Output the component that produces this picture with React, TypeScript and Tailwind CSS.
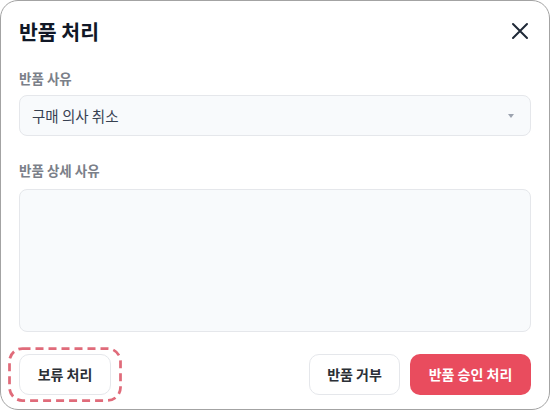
import { useState } from "react";

const reasons = ["구매 의사 취소", "상품 불량", "오배송", "기타"];

export default function App() {
  const [reason] = useState(reasons[0]);

  return (
    <div className="w-[550px] h-[412px] bg-white font-['Noto_Sans_CJK_KR','Noto_Sans',sans-serif]">
      <div className="w-[550px] h-[410px] rounded-[18px] border border-[#a3a3a3] bg-white flex flex-col px-[18px] pt-[16px] pb-[14px]">
        {/* header */}
        <div className="flex items-center justify-between h-[28px]">
          <h2 className="text-[20.5px] font-bold text-[#111827] leading-[28px]">반품 처리</h2>
          <button className="w-[22px] h-[22px] flex items-center justify-center text-[#1f2937]">
            <svg width="22" height="22" viewBox="0 0 22 22" fill="none" stroke="currentColor" strokeWidth="2" strokeLinecap="round">
              <path d="M4 4 L18 18 M18 4 L4 18" />
            </svg>
          </button>
        </div>

        <label className="mt-[23px] text-[13.5px] leading-[20px] font-semibold text-[#7b8089]">반품 사유</label>
        <div className="mt-[7px] h-[41px] rounded-[8px] border border-[#e5e7eb] bg-[#f8fafc] flex items-center justify-between pl-[12px] pr-[16px]">
          <span className="text-[14.5px] text-[#374151]">{reason}</span>
          <span className="w-0 h-0 border-x-[3.5px] border-x-transparent border-t-[4px] border-t-[#9ca3af]" />
        </div>

        <label className="mt-[24px] text-[13.5px] leading-[20px] font-semibold text-[#7b8089]">반품 상세 사유</label>
        <textarea className="mt-[9px] h-[143px] resize-none rounded-[8px] border border-[#e5e7eb] bg-[#f8fafc] outline-none" />

        {/* actions */}
        <div className="mt-[22px] flex items-center justify-between">
          <div className="relative">
            <button className="w-[92px] h-[41px] rounded-[10px] border border-[#e5e7eb] bg-white text-[14px] font-semibold text-[#2b2f36]">
              보류 처리
            </button>
            <svg className="absolute left-[-11px] top-[-7px] pointer-events-none" width="114" height="55" viewBox="0 0 114 55" fill="none">
              <rect x="1.5" y="1.5" width="111" height="52" rx="13" stroke="#e06b7a" strokeWidth="2.75" strokeDasharray="8 5" />
            </svg>
          </div>
          <div className="flex gap-[10px]">
            <button className="w-[91px] h-[41px] rounded-[10px] border border-[#e5e7eb] bg-white text-[14px] font-semibold text-[#2b2f36]">
              반품 거부
            </button>
            <button className="w-[121px] h-[41px] rounded-[10px] bg-[#e94c5e] text-[14px] font-semibold text-white">
              반품 승인 처리
            </button>
          </div>
        </div>
      </div>
    </div>
  );
}
